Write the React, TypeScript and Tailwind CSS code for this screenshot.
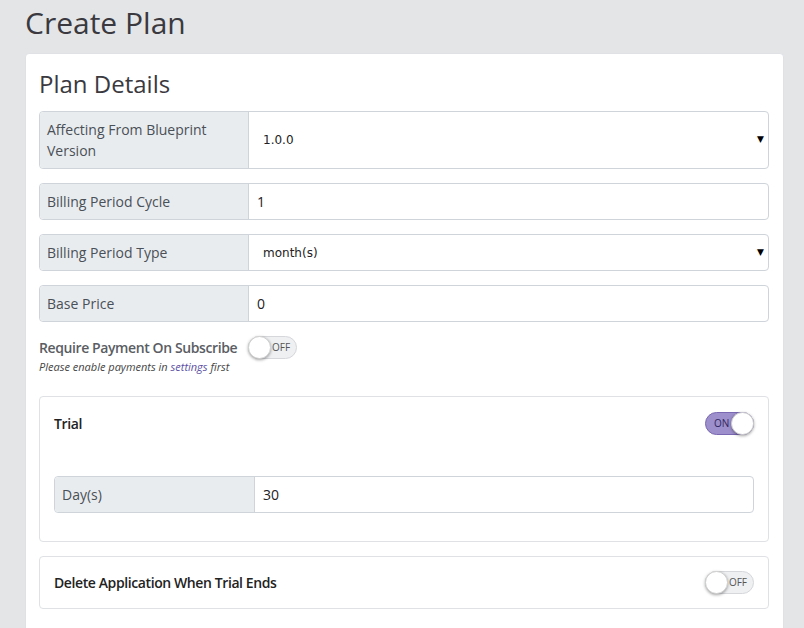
import { useState } from 'react'

function Toggle({ on, onChange }: { on: boolean; onChange: () => void }) {
  return (
    <button
      onClick={onChange}
      className={`relative h-[23px] w-[49px] rounded-full border ${
        on ? 'border-[#7a68b3] bg-[#9d8fcb]' : 'border-[#d5d7da] bg-[#eef0f2]'
      }`}
    >
      <span
        className={`absolute top-[3px] text-[10px] leading-[14px] ${
          on ? 'left-[8px] text-[#2f2660]' : 'right-[6px] text-[#555]'
        }`}
      >
        {on ? 'ON' : 'OFF'}
      </span>
      <span
        className={`absolute top-[-1px] h-[23px] w-[23px] rounded-full border border-[#d0d0d0] bg-white shadow-[0_1px_3px_rgba(0,0,0,0.35)] ${
          on ? 'right-[-1px]' : 'left-[-1px]'
        }`}
      />
    </button>
  )
}

function InputGroup({
  label,
  value,
  select,
  tall,
  labelWidth = 'w-[209px]',
}: {
  label: string
  value: string
  select?: boolean
  tall?: boolean
  labelWidth?: string
}) {
  return (
    <div className={`flex rounded border border-[#ced4da] ${tall ? 'h-[58px]' : 'h-[37px]'}`}>
      <div
        className={`${labelWidth} flex shrink-0 items-center rounded-l border-r border-[#ced4da] bg-[#e9ecef] px-[7px] text-[14px] leading-[21px] text-[#495057]`}
      >
        {label}
      </div>
      {select ? (
        <div className="flex flex-1 items-center justify-between pl-[14px] pr-[4px] font-['DejaVu_Sans',sans-serif] text-[12px] text-[#222]">
          <span>{value}</span>
          <span className="text-[9px] text-black">▼</span>
        </div>
      ) : (
        <div className="flex flex-1 items-center px-[8px] text-[14px] text-[#222]">{value}</div>
      )}
    </div>
  )
}

export default function App() {
  const [payment, setPayment] = useState(false)
  const [trial, setTrial] = useState(true)
  const [deleteApp, setDeleteApp] = useState(false)

  return (
    <div className="min-h-[628px] bg-[#e4e5e7] font-['Open_Sans',sans-serif] text-[#212529]">
      <div className="pl-[25px] pr-[20px]">
        <h1 className="pt-[1px] text-[30px] leading-[44px] text-[#3a3940]">Create Plan</h1>

        <div className="mt-[8px] rounded-t border border-[#dfe1e4] bg-white pl-[13px] pr-[14px] pt-[13px] pb-[20px]">
          <h2 className="text-[24px] leading-[34px] text-[#3a3940]">Plan Details</h2>

          <div className="mt-[10px] flex flex-col gap-[14px]">
            <InputGroup label="Affecting From Blueprint Version" value="1.0.0" select tall />
            <InputGroup label="Billing Period Cycle" value="1" />
            <InputGroup label="Billing Period Type" value="month(s)" select />
            <InputGroup label="Base Price" value="0" />
          </div>

          <div className="mt-[14px] flex items-center gap-[11px]">
            <span className="text-[14px] font-semibold tracking-[-0.4px] text-[#5a5d63]">
              Require Payment On Subscribe
            </span>
            <Toggle on={payment} onChange={() => setPayment(!payment)} />
          </div>
          <p className="text-[11px] italic leading-[15px] text-[#444]">
            Please enable payments in <a className="text-[#5b4fa3]">settings</a> first
          </p>

          <div className="mt-[22px] rounded border border-[#dfe1e4] px-[14px] pt-[15px] pb-[28px]">
            <div className="flex items-center justify-between">
              <span className="text-[14px] font-semibold tracking-[-0.4px] text-[#222]">Trial</span>
              <Toggle on={trial} onChange={() => setTrial(!trial)} />
            </div>
            {trial && (
              <div className="mt-[41px]">
                <InputGroup label="Day(s)" value="30" labelWidth="w-[200px]" />
              </div>
            )}
          </div>

          <div className="mt-[14px] flex items-center justify-between rounded border border-[#dfe1e4] px-[14px] py-[14px]">
            <span className="text-[14px] font-semibold tracking-[-0.4px] text-[#222]">
              Delete Application When Trial Ends
            </span>
            <Toggle on={deleteApp} onChange={() => setDeleteApp(!deleteApp)} />
          </div>
        </div>
      </div>
    </div>
  )
}
